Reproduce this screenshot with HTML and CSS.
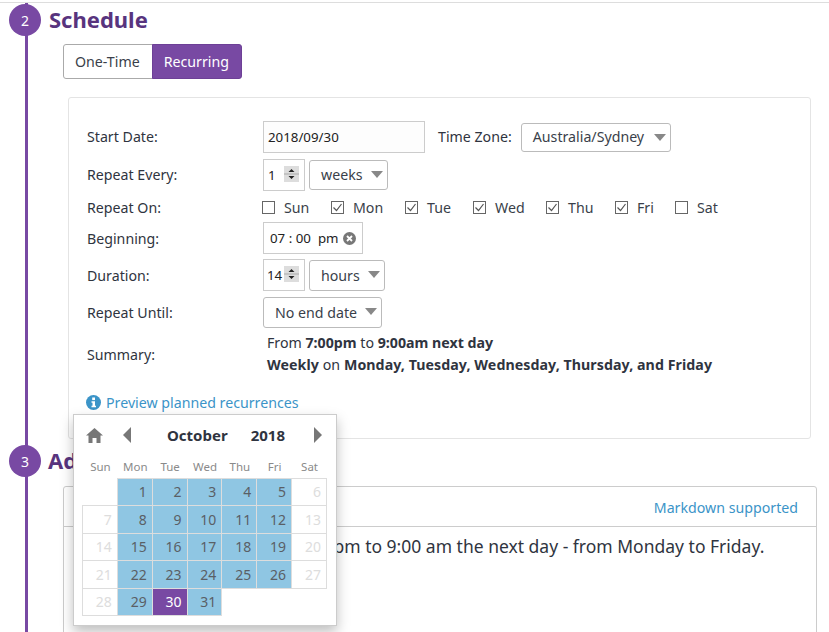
FILE: index.html
```html
<!DOCTYPE html>
<html lang="en">
<head>
<meta charset="utf-8">
<title>Schedule</title>
<link rel="stylesheet" href="styles.css">
</head>
<body>
<div class="topline"></div>
<main class="timeline">
  <section class="step step-schedule">
    <span class="bullet">2</span>
    <h2 class="step-title">Schedule</h2>
    <div class="tabs">
      <button class="tab">One-Time</button>
      <button class="tab tab-active">Recurring</button>
    </div>
    <div class="panel">
      <div class="row row-date">
        <label class="label label-up">Start Date:</label>
        <div class="input input-date">2018/09/30</div>
        <label class="tz-label label-up">Time Zone:</label>
        <div class="select select-tz"><span class="label-up">Australia/Sydney</span><span class="caret"></span></div>
      </div>
      <div class="row row-every">
        <label class="label label-up">Repeat Every:</label>
        <div class="input input-num">1<span class="spin"><svg width="15" height="16" viewBox="0 0 15 16"><rect width="15" height="16" fill="#ddd"/><rect x="0" y="7.500" width="15" height="1" fill="#aaa"/><path d="M7.500 3 10.500 6h-6zM7.500 13 4.500 10h6z" fill="#222"/></svg></span></div>
        <div class="select select-weeks"><span class="label-up">weeks</span><span class="caret"></span></div>
      </div>
      <div class="row row-days">
        <label class="label">Repeat On:</label>
        <div class="days">
          <span class="day day-sun"><span class="check"></span>Sun</span>
          <span class="day day-mon"><span class="check on"><svg width="11" height="11" viewBox="0 0 11 11"><path d="M1.500 5.500 4.500 8.500 9.500 2" fill="none" stroke="#555" stroke-width="1.200"/></svg></span>Mon</span>
          <span class="day day-tue"><span class="check on"><svg width="11" height="11" viewBox="0 0 11 11"><path d="M1.500 5.500 4.500 8.500 9.500 2" fill="none" stroke="#555" stroke-width="1.200"/></svg></span>Tue</span>
          <span class="day day-wed"><span class="check on"><svg width="11" height="11" viewBox="0 0 11 11"><path d="M1.500 5.500 4.500 8.500 9.500 2" fill="none" stroke="#555" stroke-width="1.200"/></svg></span>Wed</span>
          <span class="day day-thu"><span class="check on"><svg width="11" height="11" viewBox="0 0 11 11"><path d="M1.500 5.500 4.500 8.500 9.500 2" fill="none" stroke="#555" stroke-width="1.200"/></svg></span>Thu</span>
          <span class="day day-fri"><span class="check on"><svg width="11" height="11" viewBox="0 0 11 11"><path d="M1.500 5.500 4.500 8.500 9.500 2" fill="none" stroke="#555" stroke-width="1.200"/></svg></span>Fri</span>
          <span class="day"><span class="check"></span>Sat</span>
        </div>
      </div>
      <div class="row row-begin">
        <label class="label">Beginning:</label>
        <div class="input input-time">07 : 00 <span class="ampm">pm</span><svg class="clear" width="13" height="13" viewBox="0 0 13 13"><circle cx="6.500" cy="6.500" r="6.500" fill="#777"/><path d="M4 4 9 9M9 4 4 9" stroke="#fff" stroke-width="1.800"/></svg></div>
      </div>
      <div class="row row-duration">
        <label class="label">Duration:</label>
        <div class="input input-num input-num-tight">14<span class="spin"><svg width="15" height="16" viewBox="0 0 15 16"><rect width="15" height="16" fill="#ddd"/><rect x="0" y="7.500" width="15" height="1" fill="#aaa"/><path d="M7.500 3 10.500 6h-6zM7.500 13 4.500 10h6z" fill="#222"/></svg></span></div>
        <div class="select select-hours">hours<span class="caret"></span></div>
      </div>
      <div class="row row-until">
        <label class="label">Repeat Until:</label>
        <div class="select select-until">No end date<span class="caret"></span></div>
      </div>
      <div class="row row-summary">
        <label class="label">Summary:</label>
        <div class="summary">
          <div>From <b>7:00pm</b> to <b>9:00am next day</b></div>
          <div class="summary-days"><b>Weekly</b> on <b>Monday, Tuesday, Wednesday, Thursday, and Friday</b></div>
        </div>
      </div>
      <a class="preview"><svg width="15" height="15" viewBox="0 0 15 15"><circle cx="7.500" cy="7.500" r="7.500" fill="#3b94c8"/><rect x="6.200" y="2.500" width="2.800" height="2.600" fill="#fff"/><path d="M5.500 6.300h3.500v4.500h1v1.500H5.500v-1.500h1v-3h-1z" fill="#fff"/></svg>Preview planned recurrences</a>
    </div>
  </section>
  <section class="step step-details">
    <span class="bullet">3</span>
    <h2 class="step-title">Additional Details</h2>
    <div class="card">
      <div class="card-head"><a class="md-link">Markdown supported</a></div>
      <div class="card-body">This workshop runs from 7:00 pm to 9:00 am the next day - from Monday to Friday.</div>
    </div>
  </section>
</main>
<div class="calendar">
  <div class="cal-head">
    <svg class="cal-home" width="17" height="15" viewBox="0 0 17 15"><path d="M8.500 0 17 7.500h-2.500V15h-4v-5h-4v5h-4V7.500H0z" fill="#777"/></svg>
    <svg class="cal-prev" width="8" height="16" viewBox="0 0 8 16"><path d="M8 0V16L0 8z" fill="#777"/></svg>
    <span class="cal-month">October</span>
    <span class="cal-year">2018</span>
    <svg class="cal-next" width="8" height="16" viewBox="0 0 8 16"><path d="M0 0V16L8 8z" fill="#777"/></svg>
  </div>
  <table class="cal-table">
    <thead><tr><th>Sun</th><th>Mon</th><th>Tue</th><th>Wed</th><th>Thu</th><th>Fri</th><th>Sat</th></tr></thead>
    <tbody>
      <tr><td class="none"></td><td class="sel">1</td><td class="sel">2</td><td class="sel">3</td><td class="sel">4</td><td class="sel">5</td><td class="off">6</td></tr>
      <tr><td class="off">7</td><td class="sel">8</td><td class="sel">9</td><td class="sel">10</td><td class="sel">11</td><td class="sel">12</td><td class="off">13</td></tr>
      <tr><td class="off">14</td><td class="sel">15</td><td class="sel">16</td><td class="sel">17</td><td class="sel">18</td><td class="sel">19</td><td class="off">20</td></tr>
      <tr><td class="off">21</td><td class="sel">22</td><td class="sel">23</td><td class="sel">24</td><td class="sel">25</td><td class="sel">26</td><td class="off">27</td></tr>
      <tr><td class="off">28</td><td class="sel">29</td><td class="today">30</td><td class="sel">31</td><td class="none"></td><td class="none"></td><td class="none"></td></tr>
    </tbody>
  </table>
</div>
</body>
</html>
```
FILE: styles.css
```css
* { box-sizing: border-box; }
html, body { margin: 0; height: 632px; overflow: hidden; background: #fff; }
body { position: relative; font-family: "Noto Sans", sans-serif; font-size: 14.200px; color: #2f3440; }
.topline { height: 3px; border-bottom: 1px solid #ddd; background: #fff; }
.timeline { margin-left: 25px; border-left: 3px solid #7849a3; height: 629px; width: 792px; overflow: visible; }
.step { position: relative; }
.step-schedule { height: 437px; padding-left: 21px; }
.bullet { position: absolute; left: -19px; width: 32px; height: 32px; border-radius: 50%; background: #7849a3; color: #fff; display: flex; align-items: center; justify-content: center; font-size: 14px; }
.step-schedule .bullet { top: 1px; }
.step-title { margin: 0; font-size: 22px; line-height: 30px; font-weight: 700; color: #58347e; }
.step-schedule .step-title { padding-top: 1px; }
.tabs { display: flex; margin: 10px 0 0 14px; }
.tab { height: 35px; padding: 0 12px 0 11px; font: 14.200px "Noto Sans", sans-serif; color: #3a3f4a; background: #fff; border: 1px solid #aaa; border-radius: 3px 0 0 3px; }
.tab-active { background: #7849a3; color: #fff; border-color: #6d4096; border-radius: 0 3px 3px 0; margin-left: -1px; }
.panel { margin: 18px 0 0 19px; width: 743px; height: 342px; border: 1px solid #e4e4e4; border-radius: 3px; padding: 23px 18px 0; }
.row { display: flex; align-items: center; }
.label { width: 176px; flex: none; }
.label-up { position: relative; top: -1px; }
.input { border: 1px solid #ccc; height: 32px; display: flex; align-items: center; background: #fff; color: #222; font-size: 13.300px; }
.input-date { width: 162px; padding-left: 4px; background: #fdfdfd; }
.tz-label { margin-left: 13px; }
.select { position: relative; height: 30px; border: 1px solid #bbb; border-radius: 3px; display: flex; align-items: center; padding-left: 11px; background: #fff; color: #3a3f4a; }
.caret { position: absolute; right: 4px; top: 10px; border-left: 6px solid transparent; border-right: 6px solid transparent; border-top: 7px solid #888; }
.select-tz { margin-left: 9px; width: 150px; height: 29px; }
.row-every { margin-top: 6px; }
.input-num { width: 42px; padding-left: 4px; position: relative; }
.spin { position: absolute; right: 5px; top: 6px; display: flex; }
.select-weeks { width: 79px; margin-left: 4px; }
.row-days { margin-top: 7px; height: 18px; }
.days { display: flex; margin-left: -1px; }
.day { display: flex; align-items: center; color: #3a3f4a; }
.day-sun { width: 69px; }
.day-mon { width: 74px; }
.day-tue { width: 68px; }
.day-wed { width: 73px; }
.day-thu { width: 69px; }
.day-fri { width: 60px; }
.check { width: 13px; height: 13px; border: 1px solid #666; margin-right: 9px; display: flex; align-items: center; justify-content: center; background: #fff; }
.row-begin { margin-top: 6px; }
.input-time { width: 100px; padding-left: 6px; height: 32px; color: #222; }
.ampm { margin-left: 7px; }
.clear { margin-left: 4px; }
.row-duration { margin-top: 5px; }
.input-num-tight { padding-left: 3px; }
.select-hours { width: 76px; margin-left: 4px; height: 31px; }
.row-until { margin-top: 6px; }
.select-until { width: 119px; height: 31px; }
.row-summary { margin-top: 5px; height: 42px; }
.summary { line-height: 22px; margin-left: 4px; color: #2f3440; }
.summary b { font-weight: 700; }
.summary-days { letter-spacing: .07px; }
.preview { display: flex; align-items: center; margin: 18px 0 0 -1px; color: #3b94c8; }
.preview svg { margin-right: 5px; }
.step-details { height: 192px; padding-left: 20px; }
.step-details .bullet { top: 5px; }
.step-details .step-title { padding-top: 5px; }
.card { margin: 11px 0 0 15px; width: 754px; height: 150px; border: 1px solid #ccc; border-radius: 3px; }
.card-head { height: 40px; border-bottom: 1px solid #ccc; display: flex; align-items: center; justify-content: flex-end; padding: 2px 18px 0 0; }
.md-link { color: #3b94c8; }
.card-body { font-size: 17.500px; padding: 7px 12px 7px 20px; color: #2f3440; white-space: nowrap; }
.calendar { position: absolute; left: 73px; top: 414px; width: 264px; height: 212px; background: #fff; border: 1px solid #ccc; box-shadow: 0 6px 12px rgba(0,0,0,.25); padding: 0 8px; }
.cal-head { position: relative; height: 40px; display: flex; align-items: center; font-weight: 700; font-size: 15px; }
.cal-home { margin-left: 4px; }
.cal-prev { margin-left: 20px; }
.cal-month { margin-left: 36px; }
.cal-year { margin-left: 23px; }
.cal-next { margin-left: 29px; }
.cal-table { border-collapse: collapse; table-layout: fixed; width: 245px; margin-top: 0; }
.cal-table th { font-weight: 400; font-size: 11.500px; color: #8a8a8a; height: 23px; padding: 0 0 0 1px; text-align: center; }
.cal-table td { height: 27.500px; border: 1px solid #ddd; text-align: right; padding: 0 5px 0 0; font-size: 14px; width: 35px; }
.cal-table td.none { border: none; }
.cal-table td.sel { background: #8fc6e3; color: #5a5f66; }
.cal-table td.off { color: #ddd; background: #fff; }
.cal-table td.today { background: #7849a3; color: #fff; }
```
